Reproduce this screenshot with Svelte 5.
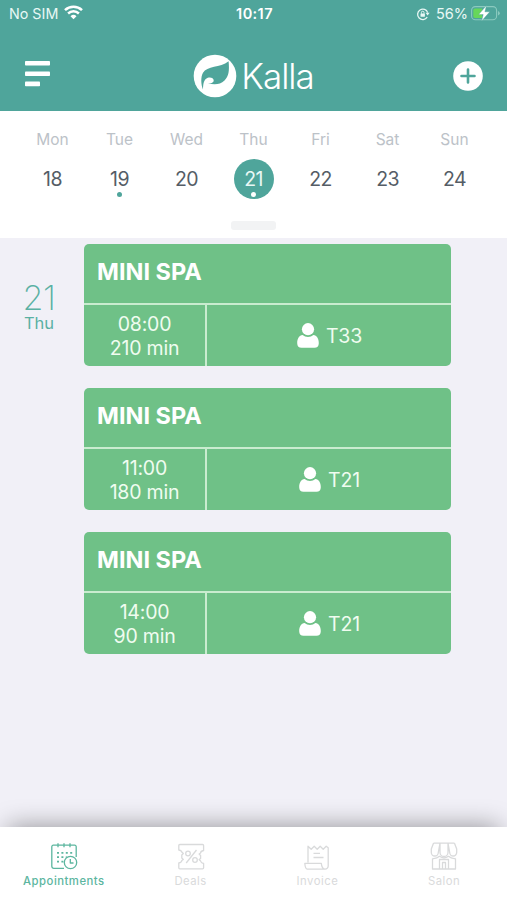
<script>
    const days = [
        { name: 'Mon', date: 18 },
        { name: 'Tue', date: 19, busy: true },
        { name: 'Wed', date: 20 },
        { name: 'Thu', date: 21, busy: true },
        { name: 'Fri', date: 22 },
        { name: 'Sat', date: 23 },
        { name: 'Sun', date: 24 },
    ];
    const appointments = [
        { title: 'MINI SPA', time: '08:00', duration: 210, client: 'T33' },
        { title: 'MINI SPA', time: '11:00', duration: 180, client: 'T21' },
        { title: 'MINI SPA', time: '14:00', duration: 90, client: 'T21' },
    ];
    const tabs = ['Appointments', 'Deals', 'Invoice', 'Salon'];
    let selected = 21;
    let activeTab = 'Appointments';
</script>

<main>
    <header>
        <div class="status">
            <div class="carrier">
                <span>No SIM</span>
                <svg width="19" height="15" viewBox="0 0 19 15" fill="none" stroke="#fff" stroke-width="2.5">
                    <path d="M1 5.2a12.3 12.3 0 0 1 17 0M4.1 8.5a7.8 7.8 0 0 1 10.8 0" />
                    <path d="M9.5 14.2 6.5 11.2a4.3 4.3 0 0 1 6 0z" fill="#fff" stroke="none" />
                </svg>
            </div>
            <span class="clock">10:17</span>
            <div class="power">
                <svg width="14" height="14" viewBox="0 0 14 14" fill="none" stroke="#e8f8f5" stroke-width="1.3">
                    <path d="M11.2 10.2a5.2 5.2 0 1 1 .5-4.6" />
                    <path d="M9.6 5.8h4l-2 2.8z" fill="#e8f8f5" stroke="none" />
                    <path d="M5.4 6.7V5.5a1.3 1.3 0 0 1 2.6 0v1.2" stroke-width="1" />
                    <rect x="4.5" y="6.4" width="4.4" height="3.3" rx=".5" fill="#e8f8f5" stroke="none" />
                </svg>
                <span class="percent">56%</span>
                <svg width="29" height="17" viewBox="0 0 29 17">
                    <rect x="0.6" y="1.6" width="25" height="13.2" rx="3.8" fill="none" stroke="#8bcabf" stroke-width="1.1" />
                    <path d="M4 3.5h7V13H4a1.7 1.7 0 0 1-1.7-1.7V5.2A1.7 1.7 0 0 1 4 3.5z" fill="#67d75a" />
                    <path d="M27 6v4.5q1.8-.7 1.8-2.2T27 6z" fill="#8bcabf" />
                    <path d="M15.5.5 7.6 9.6h4.6L10.600 16l8.200-9.200h-4.900z" fill="#fff" stroke="#4fa59b" stroke-width=".4" />
                </svg>
            </div>
        </div>
        <div class="bar">
            <button class="menu" aria-label="Menu">
                <svg width="26" height="26" viewBox="0 0 26 26" fill="#fff">
                    <rect width="25" height="4.6" rx=".8" />
                    <rect y="10.4" width="25" height="4.6" rx=".8" />
                    <rect y="20.6" width="15" height="4.6" rx=".8" />
                </svg>
            </button>
            <div class="logo">
                <svg width="44" height="44" viewBox="0 0 44 44">
                    <circle cx="22" cy="22" r="21.3" fill="#fff" />
                    <path d="M10 35.500C8 31 7.500 23 10 18.800C14 11.500 27 14 35.600 7.200C36.500 17 35.800 22 31.500 26.500C27 30.800 21 31 15 29.200C18 29.700 20.700 28.800 20.700 26.500C20.700 24 17.500 22.800 14.800 23.800C11 25.300 10.200 29 10 35.500z" fill="#4fa59b" />
                </svg>
                <span>Kalla</span>
            </div>
            <button aria-label="Add">
                <svg width="30" height="30" viewBox="0 0 30 30">
                    <circle cx="15" cy="15" r="14.8" fill="#fff" />
                    <path d="M15 8.5v13M8.5 15h13" stroke="#4fa59b" stroke-width="2.6" stroke-linecap="round" />
                </svg>
            </button>
        </div>
    </header>

    <section class="calendar">
        <div class="week">
            {#each days as day}
                <div class="day">
                    <span class="day-name">{day.name}</span>
                    <div class="date" class:selected={day.date === selected}>
                        <span>{day.date}</span>
                        {#if day.busy}<i class="dot"></i>{/if}
                    </div>
                </div>
            {/each}
        </div>
        <div class="knob"></div>
    </section>

    <section class="agenda">
        <div class="agenda-day">
            <span class="number">21</span>
            <span class="weekday">Thu</span>
        </div>
        <div class="list">
            {#each appointments as item}
                <article>
                    <h2>{item.title}</h2>
                    <div class="details">
                        <div class="time">
                            <span>{item.time}</span>
                            <span>{item.duration} min</span>
                        </div>
                        <div class="client">
                            <svg width="22" height="25" viewBox="0 0 22 25" fill="#fff">
                                <circle cx="11" cy="6.2" r="6.1" />
                                <path d="M5.6 12C2.200 12.300.2 15.800.2 20.200c0 3 1.700 4.600 4.300 4.600h13c2.600 0 4.300-1.600 4.300-4.600 0-4.400-2-7.900-5.400-8.200a8 8 0 0 1-10.800 0z" />
                            </svg>
                            <span>{item.client}</span>
                        </div>
                    </div>
                </article>
            {/each}
        </div>
    </section>

    <nav>
        {#each tabs as tab}
            <button class="tab" class:active={tab === activeTab} on:click={() => (activeTab = tab)}>
                <svg width="28" height="28" viewBox="0 0 28 28" fill="none" stroke="currentColor" stroke-width="1.3" stroke-linejoin="round">
                    {#if tab === 'Appointments'}
                        <path d="M14 26.3H3.800a2 2 0 0 1-2-2V4.700a1.500 1.500 0 0 1 1.500-1.500h21.400a1.500 1.500 0 0 1 1.500 1.500V15" />
                        <path d="M8 1.200v4M14 1.200v4M20 1.200v4" />
                        <path d="M7 10.800h2M11.400 10.800h2M15.800 10.800h2M20.200 10.800h2M7 15.200h2M11.400 15.200h2M7 19.600h2M11.400 19.600h2M15.800 15.200h1" stroke-width="1.7" />
                        <circle cx="20.5" cy="20.5" r="6.2" />
                        <path d="M20.300 17v4h3.200" />
                    {:else if tab === 'Deals'}
                        <path d="M1.800 3.500a1 1 0 0 1 1-1h22.800a1 1 0 0 1 1 1v5q-3 .5-3 2.500l-1.500 1 1.500 1.500v3l-1.500 1 1.500 1.500q.3 2 3 2.500v4.300a1 1 0 0 1-1 1H2.800a1 1 0 0 1-1-1V21q2.800-.5 3-2.500l1.500-1-1.500-1.500v-3l1.500-1.500-1.500-1.500q-.5-1.800-3-2z" />
                        <path d="m19.500 8-10.300 13" />
                        <circle cx="11" cy="11.5" r="2.3" />
                        <circle cx="18" cy="18" r="2.3" />
                    {:else if tab === 'Invoice'}
                        <path d="M5 20.500V4.200l3.200 3 3-3 3 3 3-3 3 3 3-3 2 1.500v18a3.200 3.200 0 0 1-3.200 3.500H4.300C2.500 27 2 24 1.800 21.300h16.500c.2 3.300 1.200 5.700 4 5.900" />
                        <path d="M10.500 11.300h6.500M10.500 15.500h10" />
                    {:else}
                        <path d="M3.500 1.200h21M3.500 1.200 1.300 7v3.500a3.500 3.500 0 0 0 7 0l1.700-9.300M10 1.200v9.300a4 4 0 0 0 8 0V1.200M18 1.200l1.700 9.300a3.500 3.500 0 0 0 7 0V7l-2.200-5.800" />
                        <path d="M2.500 16.500V27h7M25.500 16.500V27h-7M2.500 16.500q4 .5 7-2.200Q14 17.500 18.500 14.300q3 2.700 7 2.200M9.500 27v-9.500h9V27zM12.500 27v-6.500h3V27" />
                    {/if}
                </svg>
                <span>{tab}</span>
            </button>
        {/each}
    </nav>
</main>

<style>
    :global(body) {
        margin: 0;
    }
    main {
        display: flex;
        flex-direction: column;
        width: 507px;
        height: 900px;
        overflow: hidden;
        background: #f1f0f7;
        font-family: Inter, "Liberation Sans", sans-serif;
    }
    button {
        display: flex;
        padding: 0;
        border: none;
        background: none;
        font-family: inherit;
    }
    svg {
        display: block;
        flex: none;
    }
    header {
        height: 111px;
        flex: none;
        background: #4fa59b;
        color: #fff;
    }
    .status {
        display: grid;
        grid-template-columns: 1fr auto 1fr;
        align-items: center;
        height: 27px;
        padding: 0 7px 0 9px;
        font-size: 15px;
    }
    .carrier, .power {
        display: flex;
        align-items: center;
        color: #e8f8f5;
    }
    .carrier {
        gap: 6px;
        font-size: 14.3px;
    }
    .carrier svg {
        margin-top: -2px;
    }
    .clock {
        font-weight: 600;
        font-size: 14.5px;
        letter-spacing: 0.4px;
    }
    .power {
        justify-content: flex-end;
    }
    .percent {
        margin: 0 3px 0 6px;
        font-size: 14.5px;
    }
    .bar {
        display: flex;
        align-items: center;
        justify-content: space-between;
        height: 98px;
        padding: 0 24px 0 25px;
    }
    .menu {
        margin-bottom: 4px;
    }
    .logo {
        display: flex;
        align-items: center;
        gap: 4px;
        margin-left: 3px;
    }
    .logo span {
        font-size: 35px;
        font-weight: 300;
        line-height: 44px;
        letter-spacing: -1px;
    }
    .calendar {
        display: flex;
        flex-direction: column;
        align-items: center;
        justify-content: space-between;
        flex: none;
        height: 127px;
        padding: 19px 19px 8px;
        box-sizing: border-box;
        background: #fff;
    }
    .week {
        display: grid;
        grid-template-columns: repeat(7, 1fr);
        width: 100%;
    }
    .day {
        display: flex;
        flex-direction: column;
        align-items: center;
        gap: 9px;
    }
    .day-name {
        font-size: 15.5px;
        line-height: 20px;
        color: #bcc2c8;
    }
    .date {
        position: relative;
        width: 40px;
        height: 40px;
        border-radius: 50%;
        font-size: 19.5px;
        line-height: 41px;
        text-align: center;
        letter-spacing: -0.6px;
        color: #555d66;
    }
    .date.selected {
        background: #4fa59b;
        color: #e8f8f5;
    }
    .dot {
        position: absolute;
        left: 17.5px;
        bottom: 2.5px;
        width: 5px;
        height: 5px;
        border-radius: 50%;
        background: #4fa59b;
    }
    .selected .dot {
        background: #fff;
    }
    .knob {
        width: 45px;
        height: 9px;
        border-radius: 3px;
        background: #f2f3f4;
    }
    .agenda {
        display: flex;
        flex: 1;
        padding-top: 6px;
    }
    .agenda-day {
        display: flex;
        flex-direction: column;
        align-items: center;
        width: 78px;
        margin-right: 6px;
        padding-top: 37px;
        color: #5ab0a3;
    }
    .number {
        font-size: 34px;
        font-weight: 200;
        line-height: 34px;
        letter-spacing: -0.5px;
    }
    .weekday {
        font-size: 16.5px;
        line-height: 16px;
    }
    .list {
        display: flex;
        flex-direction: column;
        gap: 22px;
        width: 367px;
    }
    article {
        height: 122px;
        border-radius: 5px;
        background: #6fc187;
        color: #fff;
        overflow: hidden;
    }
    h2 {
        height: 59px;
        margin: 0;
        padding: 0 13px;
        font-size: 23.5px;
        font-weight: 700;
        line-height: 55px;
        letter-spacing: 0;
    }
    .details {
        display: flex;
        height: 61px;
        border-top: 2px solid #c9eccf;
        font-size: 19.5px;
    }
    .time {
        display: flex;
        flex-direction: column;
        align-items: center;
        justify-content: center;
        width: 121px;
        border-right: 2px solid #c9eccf;
        line-height: 24px;
    }
    .client {
        display: flex;
        flex: 1;
        align-items: center;
        justify-content: center;
        gap: 7px;
        padding-left: 1px;
    }
    .time, .client {
        color: #f0fcf0;
        letter-spacing: -0.2px;
    }
    nav {
        display: grid;
        grid-template-columns: repeat(4, 1fr);
        flex: none;
        height: 73px;
        background: #fff;
        box-shadow: 0 -8px 26px -8px rgba(0, 0, 0, 0.4);
    }
    .tab {
        flex-direction: column;
        align-items: center;
        padding: 15px 0 0 1px;
        gap: 4px;
        color: #d9dadb;
        font-size: 11.3px;
        line-height: 14px;
        letter-spacing: 0.5px;
    }
    .tab.active {
        color: #5cb69f;
        font-weight: 500;
    }
</style>
